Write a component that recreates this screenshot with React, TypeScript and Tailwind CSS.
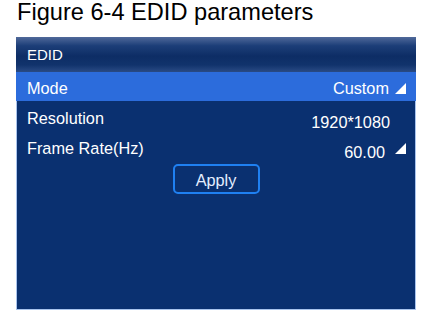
import React from "react";

function Corner() {
  return (
    <svg width="11" height="11" viewBox="0 0 11 11" className="block">
      <polygon points="11,0 11,11 0,11" fill="#ffffff" />
    </svg>
  );
}

const rows = [
  { name: "Resolution", value: "1920*1080", arrow: false, valueClass: "mr-[16px]" },
  { name: "Frame Rate(Hz)", value: "60.00", arrow: true, valueClass: "mr-[10px]" },
];

export default function App() {
  return (
    <div className="w-[422px] h-[318px] bg-white font-['Liberation_Sans',Arial,sans-serif] overflow-hidden">
      {/* caption */}
      <div className="h-[37px] pl-[17px] pt-[1px]">
        <h1 className="text-[23.6px] leading-[23px] text-black">Figure 6-4 EDID parameters</h1>
      </div>

      {/* panel */}
      <div className="ml-[16px] w-[400px] h-[273px] bg-[#0a3070] border-x border-b border-[#a9c4ee] flex flex-col">
        <div className="h-[35px] -mx-px flex items-center pl-[11px] text-[15px] leading-[15px] text-white bg-[linear-gradient(to_bottom,#50699a_0%,#1c3e78_25%,#0d2d65_55%,#11336c_80%,#2a4b85_100%)]">
          EDID
        </div>

        <div className="h-[29px] -mx-px bg-[#2c6cdc] pl-[11px] pr-[10px] pt-[8px] flex items-start justify-between text-[16.3px] leading-[16px] text-white">
          <span>Mode</span>
          <div className="flex items-start">
            <span>Custom</span>
            <div className="ml-[6px] mt-[3px]">
              <Corner />
            </div>
          </div>
        </div>

        {rows.map((row, idx) => (
          <div
            key={idx}
            className="h-[30px] pl-[10px] pr-[9px] pt-[9px] flex items-start justify-between text-[16.3px] leading-[16px] text-white"
          >
            <span>{row.name}</span>
            <div className="flex items-start mt-[4px]">
              <span className={row.arrow ? "" : row.valueClass}>{row.value}</span>
              {row.arrow && (
                <div className="ml-[10px] -mt-[1px]">
                  <Corner />
                </div>
              )}
            </div>
          </div>
        ))}

        <div className="flex justify-center mt-[3px]">
          <button className="w-[87px] h-[30px] rounded-[5px] border-2 border-[#1f80f2] bg-[#0a3070] text-[16.3px] leading-[16px] text-[#e4eeff] pt-[2px]">
            Apply
          </button>
        </div>
      </div>
    </div>
  );
}
